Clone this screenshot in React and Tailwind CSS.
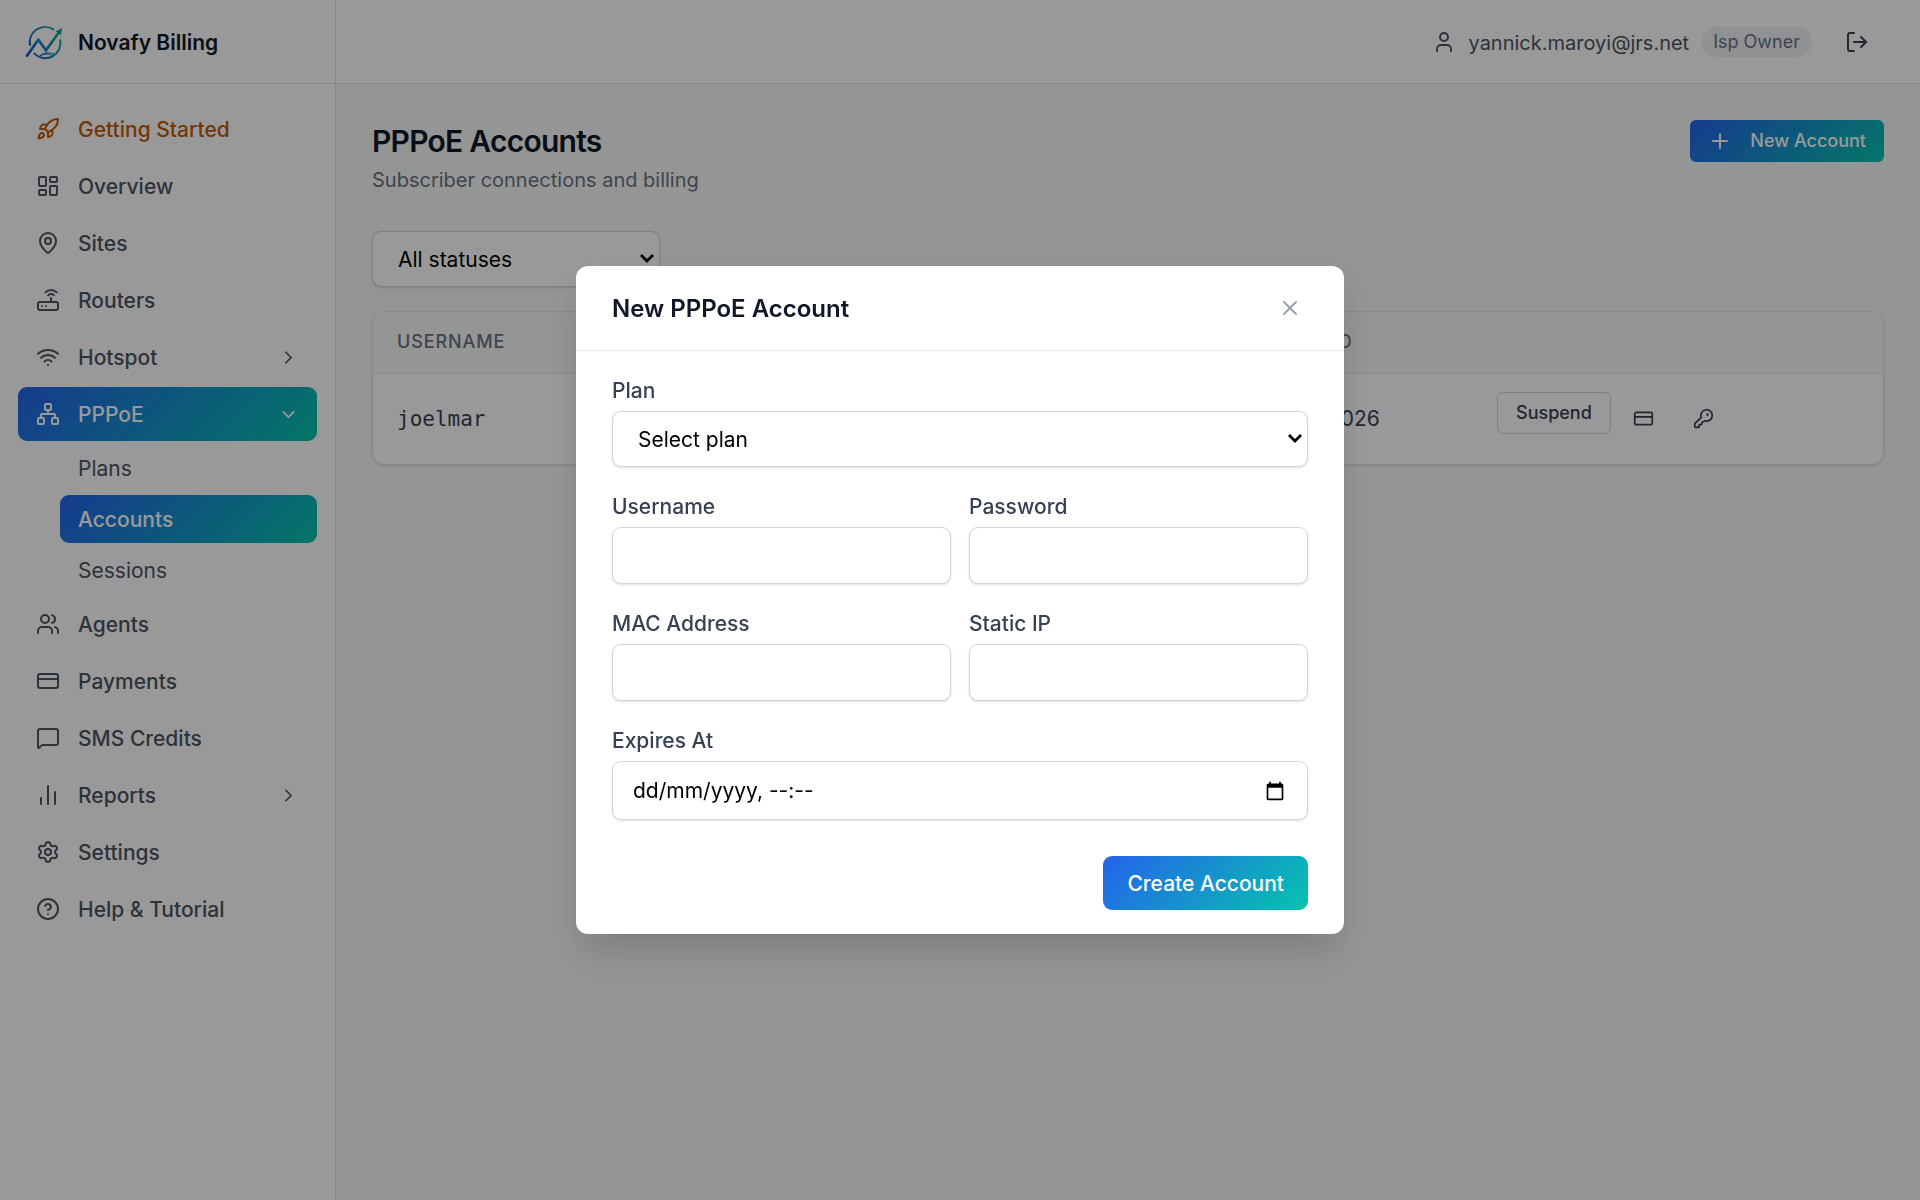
import React from "react";
import {
  Rocket,
  LayoutDashboard,
  MapPin,
  Router,
  Wifi,
  Network,
  Users,
  CreditCard,
  Settings,
  CircleHelp,
  ChevronRight,
  ChevronDown,
  User,
  LogOut,
  Plus,
  X,
} from "lucide-react";

const navTop = [
  { label: "Getting Started", icon: Rocket, accent: true },
  { label: "Overview", icon: LayoutDashboard },
  { label: "Sites", icon: MapPin },
  { label: "Routers", icon: Router },
  { label: "Hotspot", icon: Wifi, chevron: true },
];

const navBottom = [
  { label: "Agents", icon: Users },
  { label: "Payments", icon: CreditCard },
  { label: "SMS Credits", icon: MessageIcon },
  { label: "Reports", icon: ReportsIcon, chevron: true },
  { label: "Settings", icon: Settings },
  { label: "Help & Tutorial", icon: CircleHelp },
];

const subItems = [
  { label: "Plans" },
  { label: "Accounts", active: true },
  { label: "Sessions" },
];

function ReportsIcon({ size, strokeWidth }) {
  return (
    <svg width={size} height={size} viewBox="0 0 24 24" fill="none" stroke="currentColor" strokeWidth={strokeWidth} strokeLinecap="round" aria-hidden="true">
      <path d="M5 21v-6M12 21V3M19 21V9" />
    </svg>
  );
}

function MessageIcon({ size, strokeWidth }) {
  return (
    <svg width={size} height={size} viewBox="0 0 24 24" fill="none" stroke="currentColor" strokeWidth={strokeWidth} strokeLinecap="round" strokeLinejoin="round" aria-hidden="true">
      <path d="M22 17a2 2 0 0 1-2 2H6.828a2 2 0 0 0-1.414.586l-2.202 2.202A.71.71 0 0 1 2 21.286V5a2 2 0 0 1 2-2h16a2 2 0 0 1 2 2z" />
    </svg>
  );
}

function KeyIcon() {
  return (
    <svg width="21" height="21" viewBox="0 0 24 24" fill="none" stroke="currentColor" strokeWidth="2" strokeLinecap="round" strokeLinejoin="round" aria-hidden="true">
      <path d="M2.586 17.414A2 2 0 0 0 2 18.828V21a1 1 0 0 0 1 1h3a1 1 0 0 0 1-1v-1a1 1 0 0 1 1-1h1a1 1 0 0 0 1-1v-1a1 1 0 0 1 1-1h.172a2 2 0 0 0 1.414-.586l.814-.814a6.5 6.5 0 1 0-4-4z" />
      <circle cx="16.5" cy="7.5" r=".5" fill="currentColor" />
    </svg>
  );
}

function Logo() {
  return (
    <svg className="size-[42px] shrink-0" viewBox="0 0 126 126" fill="none" aria-hidden="true">
      <defs>
        <linearGradient id="brand" x1="10" y1="100" x2="110" y2="30" gradientUnits="userSpaceOnUse">
          <stop offset="0" stopColor="#1d4fd8" />
          <stop offset="0.5" stopColor="#1888b8" />
          <stop offset="1" stopColor="#10b981" />
        </linearGradient>
      </defs>
      <g stroke="url(#brand)" strokeLinecap="round">
        <path d="M18 72A46 46 0 0 1 88 25" strokeWidth="6" />
        <path d="M109 58A46 46 0 0 1 31 98" strokeWidth="6" />
        <path d="M9 104L43 56L66 88L105 34" strokeWidth="8" strokeLinejoin="round" />
        <path d="M66 88L68 101M48 104C55 94 80 94 91 99M48 104L68 98L88 104" strokeWidth="3" />
      </g>
      <path d="M114 22L111 43L95 31Z" fill="#109a9a" />
    </svg>
  );
}

function NavItem({ item, active, children }) {
  const Icon = item.icon;
  const tone = active
    ? "bg-[linear-gradient(135deg,#2563eb,#06c4ae)] text-white"
    : item.accent
      ? "text-[#c45a08]"
      : "text-[#4b5563]";
  return (
    <a href="#" className={`flex h-[54px] items-center gap-[18px] rounded-[9px] px-[18px] font-medium ${tone}`}>
      <Icon size={24} strokeWidth={2} />
      <span className="flex-1 pt-0.5">{item.label}</span>
      {children}
    </a>
  );
}

function Sidebar() {
  return (
    <aside className="flex w-[336px] shrink-0 flex-col border-r border-[#dfe3ea] bg-white">
      <div className="flex h-[84px] items-center gap-3 border-b border-[#dfe3ea] pl-6 font-semibold text-gray-900">
        <Logo />
        <span className="pt-0.5">Novafy Billing</span>
      </div>
      <nav className="flex flex-col gap-[3px] p-[18px]">
        {navTop.map((item) => (
          <NavItem key={item.label} item={item}>
            {item.chevron && <ChevronRight size={21} strokeWidth={2} />}
          </NavItem>
        ))}
        <NavItem item={{ label: "PPPoE", icon: Network }} active>
          <ChevronDown size={21} strokeWidth={2} />
        </NavItem>
        {subItems.map((item) => (
          <a
            key={item.label}
            href="#"
            className={`ml-[42px] flex h-12 items-center rounded-[9px] px-[18px] ${
              item.active ? "bg-[linear-gradient(135deg,#2563eb,#06c4ae)] font-medium text-white" : "text-[#4b5563]"
            }`}
          >
            <span className="pt-0.5">{item.label}</span>
          </a>
        ))}
        {navBottom.map((item) => (
          <NavItem key={item.label} item={item}>
            {item.chevron && <ChevronRight size={21} strokeWidth={2} />}
          </NavItem>
        ))}
      </nav>
    </aside>
  );
}

function SelectBox({ id, label, option, className }) {
  return (
    <div className={`relative ${className}`}>
      <select
        id={id}
        aria-label={label}
        className="block h-14 w-full appearance-none rounded-[9px] border border-gray-300 bg-white pt-0.5 pr-12 pl-[25px] text-black shadow-sm"
      >
        <option>{option}</option>
      </select>
      <svg className="pointer-events-none absolute top-[22px] right-1.5 h-3 w-[14px]" viewBox="0 0 14 12" fill="none" stroke="#000" strokeWidth="2.8" aria-hidden="true">
        <path d="M1 2L7 8L13 2" />
      </svg>
    </div>
  );
}

function FieldLabel({ htmlFor, children }) {
  return (
    <label htmlFor={htmlFor} className="mb-1 block leading-8 font-medium text-gray-700">
      {children}
    </label>
  );
}

function TextField({ id, label, type = "text" }) {
  return (
    <div>
      <FieldLabel htmlFor={id}>{label}</FieldLabel>
      <input id={id} type={type} className="block h-[57px] w-full rounded-[9px] border border-gray-300 bg-white px-5 shadow-sm" />
    </div>
  );
}

function Main() {
  return (
    <div className="flex min-w-0 flex-1 flex-col">
      <header className="flex h-[84px] items-center justify-end border-b border-[#dfe3e4] bg-white px-9 text-[#4b5563]">
        <User size={24} strokeWidth={2} />
        <span className="ml-3 pt-0.5 text-xl">yannick.maroyi@jrs.net</span>
        <span className="ml-3 flex h-[30px] items-center rounded-full bg-[#f1f2f4] px-3 text-[18px] text-gray-500">Isp Owner</span>
        <button type="button" aria-label="Log out" className="ml-[18px] px-[15px] text-gray-700">
          <LogOut size={24} strokeWidth={2} />
        </button>
      </header>
      <main className="p-9">
        <div className="flex items-start justify-between">
          <div>
            <h1 className="text-[30px] leading-[42px] font-semibold tracking-tight text-gray-900">PPPoE Accounts</h1>
            <p className="mt-[3px] text-xl leading-[30px] text-gray-500">Subscriber connections and billing</p>
          </div>
          <button type="button" className="flex h-[42px] items-center gap-[18px] rounded-md bg-[linear-gradient(135deg,#2563eb,#06c4ae)] px-[18px] text-[18px] font-medium text-white">
            <Plus size={24} strokeWidth={2} />
            New Account
          </button>
        </div>
        <SelectBox id="status" label="Status" option="All statuses" className="mt-9 w-72" />
        <div className="mt-6 overflow-hidden rounded-xl border border-gray-200 bg-white shadow-sm">
          <table className="w-full table-fixed text-left">
            <thead>
              <tr className="h-[61px] border-b border-gray-200 bg-[#f7faf9] text-[18px] tracking-wider text-gray-500 uppercase">
                <th className="px-6 font-medium">Username</th>
                <th className="w-[226px] px-6 font-medium">Expired</th>
                <th className="w-[410px] px-6" aria-label="Actions" />
              </tr>
            </thead>
            <tbody>
              <tr className="text-gray-700">
                <td className="px-6 font-['DejaVu_Sans_Mono',monospace]">joelmar</td>
                <td className="px-6">11/07/2026</td>
                <td className="px-6 py-[18px]">
                  <div className="flex items-start gap-1.5">
                    <button type="button" className="flex h-[42px] items-center rounded-md border border-gray-300 px-[18px] text-[18px] font-medium">
                      Suspend
                    </button>
                    <button type="button" aria-label="Payments" className="flex size-[54px] items-center justify-center">
                      <CreditCard size={21} strokeWidth={2} />
                    </button>
                    <button type="button" aria-label="Reset password" className="flex size-[54px] items-center justify-center">
                      <KeyIcon />
                    </button>
                  </div>
                </td>
              </tr>
            </tbody>
          </table>
        </div>
      </main>
    </div>
  );
}

function Modal() {
  return (
    <div className="fixed inset-0 flex items-center justify-center bg-black/40">
      <div role="dialog" aria-labelledby="dialog-title" className="w-full max-w-3xl rounded-xl bg-white shadow-[0_30px_38px_-8px_rgba(0,0,0,0.1),0_12px_36px_0_rgba(15,15,40,0.08)]">
        <div className="flex items-center justify-between border-b border-gray-200 px-9 py-6">
          <h2 id="dialog-title" className="pt-0.5 text-2xl font-semibold text-gray-900">
            New PPPoE Account
          </h2>
          <button type="button" aria-label="Close" className="p-1.5 text-gray-400">
            <X size={24} strokeWidth={2} />
          </button>
        </div>
        <form className="flex flex-col gap-6 px-9 py-6">
          <div>
            <FieldLabel htmlFor="plan">Plan</FieldLabel>
            <SelectBox id="plan" option="Select plan" className="w-full" />
          </div>
          <div className="grid grid-cols-2 gap-x-[18px] gap-y-6">
            <TextField id="username" label="Username" />
            <TextField id="password" label="Password" type="password" />
            <TextField id="mac" label="MAC Address" />
            <TextField id="ip" label="Static IP" />
          </div>
          <div>
            <FieldLabel htmlFor="expires">Expires At</FieldLabel>
            <div className="flex h-[59px] items-center rounded-[9px] border border-gray-300 pr-[22px] pl-5 shadow-sm">
              <input id="expires" type="text" placeholder="dd/mm/yyyy, --:--" className="min-w-0 flex-1 text-black placeholder:text-black" />
              <button type="button" aria-label="Open calendar">
                <svg className="size-5" viewBox="0 0 24 24" fill="#000" aria-hidden="true">
                  <path d="M20 3h-1V1h-2v2H7V1H5v2H4c-1.1 0-2 .9-2 2v16c0 1.1.9 2 2 2h16c1.1 0 2-.9 2-2V5c0-1.1-.9-2-2-2zm0 18H4V8h16v13z" />
                </svg>
              </button>
            </div>
          </div>
          <button type="submit" className="mt-3 h-[54px] self-end rounded-[9px] bg-[linear-gradient(135deg,#2563eb,#06c4ae)] px-6 pt-0.5 font-medium text-white">
            Create Account
          </button>
        </form>
      </div>
    </div>
  );
}

export default function App() {
  return (
    <div className="flex min-h-screen bg-[#f7faf9] font-[Inter,sans-serif] text-[21px] leading-[30px]">
      <Sidebar />
      <Main />
      <Modal />
    </div>
  );
}
